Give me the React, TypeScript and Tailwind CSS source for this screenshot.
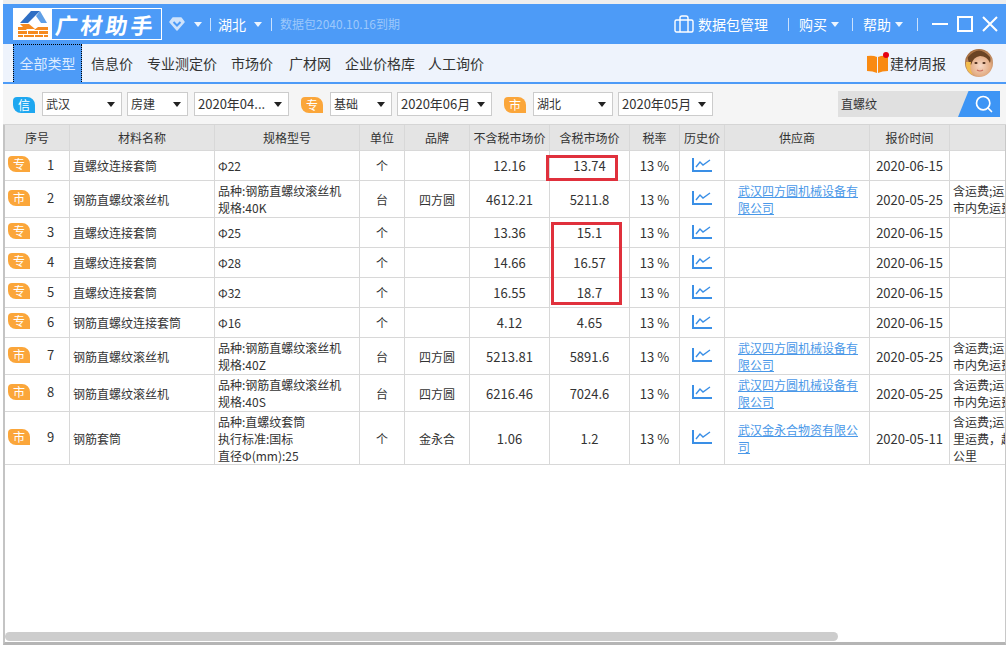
import { Search } from 'lucide-react';

const FONT = '[font-family:"Noto_Sans_CJK_SC","Liberation_Sans",sans-serif]';

type Row = {
  no: number;
  tag: string;
  name: string;
  spec: string[];
  unit: string;
  brand: string;
  price: string;
  taxPrice: string;
  supplier: string[];
  date: string;
  note: string[];
  h: string;
};

const SPEC_40K = ['品种:钢筋直螺纹滚丝机', '规格:40K'];
const SIFANG = ['武汉四方圆机械设备有', '限公司'];
const NOTE = ['含运费;运费', '市内免运费'];

const rows: Row[] = [
  { no: 1, tag: '专', name: '直螺纹连接套筒', spec: ['Φ22'], unit: '个', brand: '', price: '12.16', taxPrice: '13.74', supplier: [], date: '2020-06-15', note: [], h: 'h-[30px]' },
  { no: 2, tag: '市', name: '钢筋直螺纹滚丝机', spec: SPEC_40K, unit: '台', brand: '四方圆', price: '4612.21', taxPrice: '5211.8', supplier: SIFANG, date: '2020-05-25', note: NOTE, h: 'h-[37px]' },
  { no: 3, tag: '专', name: '直螺纹连接套筒', spec: ['Φ25'], unit: '个', brand: '', price: '13.36', taxPrice: '15.1', supplier: [], date: '2020-06-15', note: [], h: 'h-[30px]' },
  { no: 4, tag: '专', name: '直螺纹连接套筒', spec: ['Φ28'], unit: '个', brand: '', price: '14.66', taxPrice: '16.57', supplier: [], date: '2020-06-15', note: [], h: 'h-[30px]' },
  { no: 5, tag: '专', name: '直螺纹连接套筒', spec: ['Φ32'], unit: '个', brand: '', price: '16.55', taxPrice: '18.7', supplier: [], date: '2020-06-15', note: [], h: 'h-[30px]' },
  { no: 6, tag: '专', name: '钢筋直螺纹连接套筒', spec: ['Φ16'], unit: '个', brand: '', price: '4.12', taxPrice: '4.65', supplier: [], date: '2020-06-15', note: [], h: 'h-[30px]' },
  { no: 7, tag: '市', name: '钢筋直螺纹滚丝机', spec: ['品种:钢筋直螺纹滚丝机', '规格:40Z'], unit: '台', brand: '四方圆', price: '5213.81', taxPrice: '5891.6', supplier: SIFANG, date: '2020-05-25', note: NOTE, h: 'h-[37px]' },
  { no: 8, tag: '市', name: '钢筋直螺纹滚丝机', spec: ['品种:钢筋直螺纹滚丝机', '规格:40S'], unit: '台', brand: '四方圆', price: '6216.46', taxPrice: '7024.6', supplier: SIFANG, date: '2020-05-25', note: NOTE, h: 'h-[37px]' },
  { no: 9, tag: '市', name: '钢筋套筒', spec: ['品种:直螺纹套筒', '执行标准:国标', '直径Φ(mm):25'], unit: '个', brand: '金永合', price: '1.06', taxPrice: '1.2', supplier: ['武汉金永合物资有限公', '司'], date: '2020-05-11', note: ['含运费;运费', '里运费，超', '公里'], h: 'h-[53px]' },
];

const headers = ['序号', '材料名称', '规格型号', '单位', '品牌', '不含税市场价', '含税市场价', '税率', '历史价', '供应商', '报价时间', ''];

function Caret({ className = 'border-t-white/90' }: { className?: string }) {
  return <span className={`block w-0 h-0 border-x-[4px] border-x-transparent border-t-[5px] ${className}`} />;
}

function Divider() {
  return <span className="w-px h-[13px] bg-white/70" />;
}

function Logo() {
  return (
    <div className="flex items-stretch h-[32px] border border-white">
      <div className="w-[38px] bg-white flex items-center justify-center">
        <svg width="34" height="28" viewBox="0 0 34 28">
          <path d="M4 13 L15 1 H24 L12 13 Z" fill="#2f6fc4" />
          <path d="M24 1 L31 13 H25 L20 6 Z" fill="#5f9fe6" />
          <path d="M4 14 H13 L19 19 H9 Z" fill="#f58a1f" />
          <path d="M2 17 H8 L11 20 H2 Z M22 17 H32 V20 H18 Z" fill="#f58a1f" />
          <path d="M2 21 H11 V24 H2 Z M12 21 H22 V24 H12 Z M23 21 H32 V24 H23 Z" fill="#f58a1f" />
          <path d="M2 25 H7 V27 H2 Z M8 25 H18 V27 H8 Z M19 25 H27 V27 H19 Z M28 25 H32 V27 H28 Z" fill="#f58a1f" />
        </svg>
      </div>
      <div className="w-[109px] flex items-center justify-center text-white font-bold text-[22px] tracking-[3px] leading-none">
        <span className="-skew-x-[8deg] whitespace-nowrap">广材助手</span>
      </div>
    </div>
  );
}

function HeaderBar() {
  return (
    <div className="h-[40px] bg-[#4d9bf7] flex items-center pl-[10px] pr-[8px] text-white text-[14px]">
      <Logo />
      <svg width="16" height="16" viewBox="0 0 16 16" className="ml-[7px]">
        <path d="M4 2 H12 L15 6 L8 14 L1 6 Z" fill="#cfe3fb" stroke="#cfe3fb" strokeWidth="1.5" strokeLinejoin="round" />
        <path d="M4.5 6 L8 9.5 L11.5 6" stroke="#4d9bf7" strokeWidth="2" fill="none" />
      </svg>
      <span className="ml-[9px] mr-[8px]"><Caret /></span>
      <Divider />
      <span className="ml-[7px]">湖北</span>
      <span className="ml-[8px] mr-[9px]"><Caret /></span>
      <Divider />
      <span className="ml-[8px] text-[12px] text-[#9cc8fb]">数据包2040.10.16到期</span>
      <div className="ml-auto flex items-center">
        <svg width="20" height="18" viewBox="0 0 20 18" fill="none" stroke="white" strokeWidth="1.4">
          <rect x="1" y="5" width="18" height="12" rx="1.5" />
          <path d="M6 17 V3 Q6 1 8 1 H12 Q14 1 14 3 V17" />
        </svg>
        <span className="ml-[4px]">数据包管理</span>
        <span className="ml-[20px] mr-[10px] flex"><Divider /></span>
        <span>购买</span>
        <span className="ml-[4px] mr-[13px]"><Caret /></span>
        <Divider />
        <span className="ml-[10px]">帮助</span>
        <span className="ml-[4px] mr-[14px]"><Caret /></span>
        <Divider />
        <svg width="66" height="18" viewBox="0 0 66 18" className="ml-[14px]" fill="none" stroke="white" strokeWidth="2">
          <path d="M0 9 H16" />
          <rect x="26" y="2" width="14" height="14" />
          <path d="M51 2 L65 16 M65 2 L51 16" />
        </svg>
      </div>
    </div>
  );
}

function Avatar() {
  return (
    <svg width="28" height="28" viewBox="0 0 28 28">
      <defs>
        <radialGradient id="face" cx="0.55" cy="0.6" r="0.6">
          <stop offset="0" stopColor="#f6d8c6" />
          <stop offset="0.6" stopColor="#e4ad85" />
          <stop offset="1" stopColor="#a0693a" />
        </radialGradient>
      </defs>
      <circle cx="14" cy="14" r="14" fill="url(#face)" />
      <path d="M3 8 Q14 -5 25 8 Q26 11 25 14 Q22 7 15 7 Q8 8 6 16 Q2 12 3 8 Z" fill="#6b4424" />
      <path d="M1 13 Q0 22 8 26 Q4 20 6 13 Z" fill="#f2bd4e" />
      <ellipse cx="11" cy="14" rx="1.6" ry="1" fill="#4a2c1a" />
      <ellipse cx="19" cy="14" rx="1.6" ry="1" fill="#4a2c1a" />
      <path d="M12 21 Q15 23 18 21" stroke="#c9675a" strokeWidth="1.2" fill="none" />
    </svg>
  );
}

function TabBar() {
  const tabs = ['信息价', '专业测定价', '市场价'];
  return (
    <div className="h-[40px] bg-[#eef3fc] border-b-2 border-[#4d9bf7] flex items-stretch pl-[10px] pr-[13px] text-[14px] text-[#333]">
      <div className="w-[69px] border border-b-0 border-dotted border-black bg-[#4d9bf7] text-[#dcebff] flex items-center justify-center">全部类型</div>
      <div className="ml-[9px] flex items-center gap-[14px]">
        {tabs.map(t => <span key={t}>{t}</span>)}
        <span className="ml-[2px]">广材网</span>
        <span>企业价格库</span>
        <span className="ml-[-1px]">人工询价</span>
      </div>
      <div className="ml-auto flex items-center">
        <div className="relative mr-[2px]">
          <svg width="21" height="19" viewBox="0 0 21 19" className="block">
            <path d="M0 2 Q6 1 10 3 V19 Q6 17 0 17 Z M11 3 Q15 1 21 2 V17 Q15 17 11 19 Z" fill="#f98a12" />
          </svg>
          <span className="absolute right-[-1px] top-[-2px] w-[6px] h-[6px] rounded-full bg-[#e60012]" />
        </div>
        <span>建材周报</span>
        <span className="ml-[19px]"><Avatar /></span>
      </div>
    </div>
  );
}

function Select({ label, w, ml, size = 'text-[12px]' }: { label: string; w: string; ml: string; size?: string }) {
  return (
    <div className={`${w} ${ml} ${size} h-[24px] bg-white border border-[#ccc] flex items-center justify-between pl-[3px] pr-[6px] text-[#333]`}>
      <span className="whitespace-nowrap">{label}</span>
      <Caret className="border-t-[#222]" />
    </div>
  );
}

function FilterBadge({ label, color, ml }: { label: string; color: string; ml: string }) {
  return (
    <span className={`${color} ${ml} mt-[1px] w-[22px] h-[16px] rounded-tl-[4px] rounded-tr-[8px] rounded-bl-[8px] text-white text-[12px] leading-[16px] text-center`}>{label}</span>
  );
}

function FilterBar() {
  return (
    <div className="h-[41px] bg-[#f5f5f5] border-b border-[#d5d5d5] flex items-center pl-[10px] pr-[6px]">
      <FilterBadge label="信" color="bg-[#1ea7f0]" ml="" />
      <Select label="武汉" w="w-[80px]" ml="ml-[7px]" />
      <Select label="房建" w="w-[61px]" ml="ml-[5px]" />
      <Select label="2020年04..." w="w-[95px]" ml="ml-[6px]" size="text-[13px]" />
      <FilterBadge label="专" color="bg-[#fba63a]" ml="ml-[12px]" />
      <Select label="基础" w="w-[62px]" ml="ml-[7px]" />
      <Select label="2020年06月" w="w-[95px]" ml="ml-[5px]" size="text-[13px]" />
      <FilterBadge label="市" color="bg-[#fba63a]" ml="ml-[12px]" />
      <Select label="湖北" w="w-[80px]" ml="ml-[7px]" />
      <Select label="2020年05月" w="w-[95px]" ml="ml-[5px]" size="text-[13px]" />
      <div className="ml-auto w-[162px] h-[26px] bg-[#e0e0e0] flex items-center relative text-[12px] text-[#333] pl-[3px]">
        直螺纹
        <div className="absolute right-0 top-0 h-[26px] w-[42px] bg-[#3d95f5] [clip-path:polygon(25%_0,100%_0,100%_100%,0_100%)] flex items-center justify-end pr-[6px]">
          <Search size={20} color="white" strokeWidth={2} />
        </div>
      </div>
    </div>
  );
}

function ChartIcon() {
  return (
    <svg width="20" height="14" viewBox="0 0 20 14" fill="none" className="mx-auto block mt-[-2px]">
      <path d="M1 0 V13 H20" stroke="#3a8fe6" strokeWidth="2" />
      <path d="M4 9 L8 4 L11 7 L18 2" stroke="#3a8fe6" strokeWidth="1.4" />
    </svg>
  );
}

function DataTable() {
  const cell = 'border-r border-b border-[#d8d8d8] p-0 align-middle';
  return (
    <div className="relative w-[1000px] overflow-hidden">
      <table className="table-fixed border-separate border-spacing-0 w-[1001px] text-[12px] text-[#333] leading-[17px]">
        <colgroup>
          <col className="w-[65px]" />
          <col className="w-[145px]" />
          <col className="w-[145px]" />
          <col className="w-[45px]" />
          <col className="w-[65px]" />
          <col className="w-[80px]" />
          <col className="w-[80px]" />
          <col className="w-[50px]" />
          <col className="w-[45px]" />
          <col className="w-[145px]" />
          <col className="w-[80px]" />
          <col className="w-[56px]" />
        </colgroup>
        <thead>
          <tr className="h-[26px] bg-[#e4e4e4]">
            {headers.map((h, i) => (
              <th key={i} className={`${cell} font-normal text-center whitespace-nowrap`}>{h}</th>
            ))}
          </tr>
        </thead>
        <tbody>
          {rows.map(r => (
            <tr key={r.no} className={`${r.h} bg-white`}>
              <td className={cell}>
                <div className="flex items-center pl-[3px] mt-[-3px]">
                  <span className="w-[22px] h-[16px] bg-[#fba63a] rounded-tl-[4px] rounded-tr-[8px] rounded-bl-[8px] text-white text-[12px] leading-[16px] text-center">{r.tag}</span>
                  <span className="ml-[17px] text-[13px]">{r.no}</span>
                </div>
              </td>
              <td className={`${cell} pl-[3px]`}>{r.name}</td>
              <td className={`${cell} pl-[3px] whitespace-nowrap`}>
                {r.spec.map(s => <div key={s}>{s}</div>)}
              </td>
              <td className={`${cell} text-center`}>{r.unit}</td>
              <td className={`${cell} text-center`}>{r.brand}</td>
              <td className={`${cell} text-center text-[13px]`}>{r.price}</td>
              <td className={`${cell} text-center text-[13px]`}>{r.taxPrice}</td>
              <td className={`${cell} text-center text-[13px]`}>13 %</td>
              <td className={cell}><ChartIcon /></td>
              <td className={`${cell} pl-[13px] text-[#4a98e8] underline whitespace-nowrap`}>
                {r.supplier.map(s => <div key={s}>{s}</div>)}
              </td>
              <td className={`${cell} text-center text-[13px]`}>{r.date}</td>
              <td className={`${cell} pl-[3px] whitespace-nowrap`}>
                {r.note.map(s => <div key={s}>{s}</div>)}
              </td>
            </tr>
          ))}
        </tbody>
      </table>
      <div className="absolute left-[541px] top-[30px] w-[72px] h-[26px] border-[3px] border-[#e0303c]" />
      <div className="absolute left-[546px] top-[97px] w-[71px] h-[83px] border-[3px] border-[#e0303c]" />
    </div>
  );
}

export default function App() {
  return (
    <div className={`${FONT} w-[1006px] h-[645px] overflow-hidden bg-white flex flex-col pl-[3px]`}>
      <div className="h-[4px] bg-[#eeeeee]" />
      <HeaderBar />
      <TabBar />
      <FilterBar />
      <div className="flex-1 flex flex-col border-l-2 border-l-[#c4c4c4] border-r border-r-[#c8c8c8] border-b-[3px] border-b-[#b5b5b5]">
        <DataTable />
        <div className="mt-auto mb-[1px] w-[833px] h-[9px] rounded-full bg-[#cdcdcd]" />
      </div>
    </div>
  );
}
